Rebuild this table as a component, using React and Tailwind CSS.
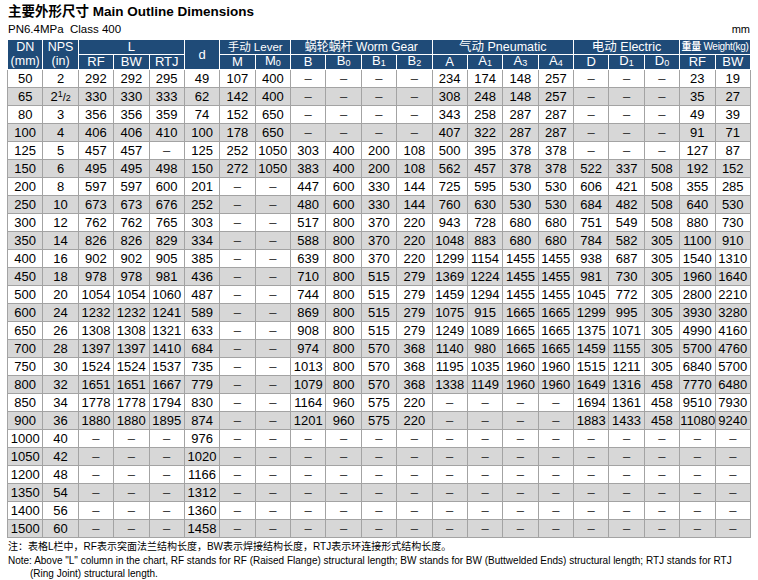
const D = "–";

const rows = [
  ["50", "2", "292", "292", "295", "49", "107", "400", D, D, D, D, "234", "174", "148", "257", D, D, D, "23", "19"],
  ["65", "half", "330", "330", "333", "62", "142", "400", D, D, D, D, "308", "248", "148", "257", D, D, D, "35", "27"],
  ["80", "3", "356", "356", "359", "74", "152", "650", D, D, D, D, "343", "258", "287", "287", D, D, D, "49", "39"],
  ["100", "4", "406", "406", "410", "100", "178", "650", D, D, D, D, "407", "322", "287", "287", D, D, D, "91", "71"],
  ["125", "5", "457", "457", D, "125", "252", "1050", "303", "400", "200", "108", "500", "395", "378", "378", D, D, D, "127", "87"],
  ["150", "6", "495", "495", "498", "150", "272", "1050", "383", "400", "200", "108", "562", "457", "378", "378", "522", "337", "508", "192", "152"],
  ["200", "8", "597", "597", "600", "201", D, D, "447", "600", "330", "144", "725", "595", "530", "530", "606", "421", "508", "355", "285"],
  ["250", "10", "673", "673", "676", "252", D, D, "480", "600", "330", "144", "760", "630", "530", "530", "684", "482", "508", "640", "530"],
  ["300", "12", "762", "762", "765", "303", D, D, "517", "800", "370", "220", "943", "728", "680", "680", "751", "549", "508", "880", "730"],
  ["350", "14", "826", "826", "829", "334", D, D, "588", "800", "370", "220", "1048", "883", "680", "680", "784", "582", "305", "1100", "910"],
  ["400", "16", "902", "902", "905", "385", D, D, "639", "800", "370", "220", "1299", "1154", "1455", "1455", "938", "687", "305", "1540", "1310"],
  ["450", "18", "978", "978", "981", "436", D, D, "710", "800", "515", "279", "1369", "1224", "1455", "1455", "981", "730", "305", "1960", "1640"],
  ["500", "20", "1054", "1054", "1060", "487", D, D, "744", "800", "515", "279", "1459", "1294", "1455", "1455", "1045", "772", "305", "2800", "2210"],
  ["600", "24", "1232", "1232", "1241", "589", D, D, "869", "800", "515", "279", "1075", "915", "1665", "1665", "1299", "995", "305", "3930", "3280"],
  ["650", "26", "1308", "1308", "1321", "633", D, D, "908", "800", "515", "279", "1249", "1089", "1665", "1665", "1375", "1071", "305", "4990", "4160"],
  ["700", "28", "1397", "1397", "1410", "684", D, D, "974", "800", "570", "368", "1140", "980", "1665", "1665", "1459", "1155", "305", "5700", "4760"],
  ["750", "30", "1524", "1524", "1537", "735", D, D, "1013", "800", "570", "368", "1195", "1035", "1960", "1960", "1515", "1211", "305", "6840", "5700"],
  ["800", "32", "1651", "1651", "1667", "779", D, D, "1079", "800", "570", "368", "1338", "1149", "1960", "1960", "1649", "1316", "458", "7770", "6480"],
  ["850", "34", "1778", "1778", "1794", "830", D, D, "1164", "960", "575", "220", D, D, D, D, "1694", "1361", "458", "9510", "7930"],
  ["900", "36", "1880", "1880", "1895", "874", D, D, "1201", "960", "575", "220", D, D, D, D, "1883", "1433", "458", "11080", "9240"],
  ["1000", "40", D, D, D, "976", ...Array(15).fill(D)],
  ["1050", "42", D, D, D, "1020", ...Array(15).fill(D)],
  ["1200", "48", D, D, D, "1166", ...Array(15).fill(D)],
  ["1350", "54", D, D, D, "1312", ...Array(15).fill(D)],
  ["1400", "56", D, D, D, "1360", ...Array(15).fill(D)],
  ["1500", "60", D, D, D, "1458", ...Array(15).fill(D)],
];

function Sub({ base, n }) {
  return (
    <span>
      {base}
      <span className="text-[9px] align-[-1px]">{n}</span>
    </span>
  );
}

const hd = "border border-white text-white font-normal p-0 text-center whitespace-nowrap";

export default function App() {
  return (
    <div className="w-[758px] h-[580px] bg-white text-black font-['Liberation_Sans','Noto_Sans_CJK_SC',sans-serif] overflow-hidden">
      <div className="px-[7px] pt-[3px]">
        {/* title */}
        <h1 className="text-[13.5px] font-bold leading-[17px] pl-px">主要外形尺寸 Main Outline Dimensions</h1>
        <div className="flex items-end justify-between leading-[17px] h-[18px]">
          <span className="text-[11.5px] pl-px">PN6.4MPa&nbsp; Class 400</span>
          <span className="text-[11px] pr-px">mm</span>
        </div>

        {/* table */}
        <table className="w-[744px] table-fixed border-collapse mt-[1px] text-[13px]">
          <colgroup>
            {Array.from({ length: 21 }).map((_, i) => (
              <col key={i} />
            ))}
          </colgroup>
          <thead className="bg-[#1f4b78]">
            <tr className="h-[15px] leading-[14px]">
              <th rowSpan={2} className={hd + " text-[12.5px] leading-[13.5px]"}>
                DN<br />(mm)
              </th>
              <th rowSpan={2} className={hd + " text-[12.5px] leading-[13.5px]"}>
                NPS<br />(in)
              </th>
              <th colSpan={3} className={hd}>L</th>
              <th rowSpan={2} className={hd}>d</th>
              <th colSpan={2} className={hd + " text-[11.5px]"}>手动 Lever</th>
              <th colSpan={4} className={hd + " text-[12px]"}>蜗轮蜗杆 Worm Gear</th>
              <th colSpan={4} className={hd + " text-[12.5px]"}>气动 Pneumatic</th>
              <th colSpan={3} className={hd + " text-[12.5px]"}>电动 Electric</th>
              <th colSpan={2} className={hd + " text-[10px] tracking-[-0.3px]"}>
                <span className="font-bold">重量</span> Weight(kg)
              </th>
            </tr>
            <tr className="h-[13px] leading-[12px]">
              <th className={hd}>RF</th>
              <th className={hd}>BW</th>
              <th className={hd}>RTJ</th>
              <th className={hd}>M</th>
              <th className={hd}><Sub base="M" n="0" /></th>
              <th className={hd}>B</th>
              <th className={hd}><Sub base="B" n="0" /></th>
              <th className={hd}><Sub base="B" n="1" /></th>
              <th className={hd}><Sub base="B" n="2" /></th>
              <th className={hd}>A</th>
              <th className={hd}><Sub base="A" n="1" /></th>
              <th className={hd}><Sub base="A" n="3" /></th>
              <th className={hd}><Sub base="A" n="4" /></th>
              <th className={hd}>D</th>
              <th className={hd}><Sub base="D" n="1" /></th>
              <th className={hd}><Sub base="D" n="0" /></th>
              <th className={hd}>RF</th>
              <th className={hd}>BW</th>
            </tr>
          </thead>
          <tbody>
            {rows.map((r, i) => (
              <tr key={i} className={"h-[18px] " + (i % 2 === 1 ? "bg-[#d7d7d7]" : "bg-white")}>
                {r.map((c, j) => (
                  <td
                    key={j}
                    className={
                      "border border-[#a3a3a3] p-0 text-center whitespace-nowrap leading-[14px] " +
                      (c === D ? "text-[#333]" : "")
                    }
                  >
                    {c === "half" ? (
                      <span>
                        2<span className="text-[9px] align-[4px] leading-[0]">1</span>
                        <span className="text-[11px] leading-[0]">/</span>
                        <span className="text-[9px] leading-[0]">2</span>
                      </span>
                    ) : (
                      c
                    )}
                  </td>
                ))}
              </tr>
            ))}
          </tbody>
        </table>

        {/* notes */}
        <div className="mt-[2px] text-[10px] leading-[13.5px] pl-px">
          <p>注：表格L栏中，RF表示突面法兰结构长度，BW表示焊接结构长度，RTJ表示环连接形式结构长度。</p>
          <p className="whitespace-nowrap">
            Note: Above "L" column in the chart, RF stands for RF (Raised Flange) structural length; BW stands for BW (Buttwelded Ends) structural length; RTJ stands for RTJ
          </p>
          <p className="pl-[22px]">(Ring Joint) structural length.</p>
        </div>
      </div>
    </div>
  );
}
